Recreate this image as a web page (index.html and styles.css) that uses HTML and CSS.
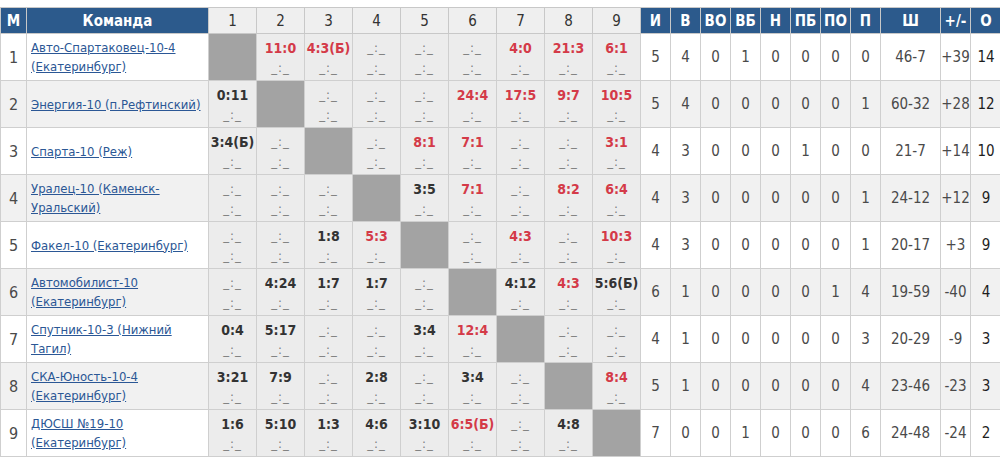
FILE: index.html
```html
<!DOCTYPE html>
<html lang="ru">
<head>
<meta charset="utf-8">
<link rel="stylesheet" href="styles.css">
</head>
<body>
<table class="tbl">
<colgroup>
<col class="c-m"><col class="c-team">
<col class="c-g"><col class="c-g"><col class="c-g"><col class="c-g"><col class="c-g"><col class="c-g"><col class="c-g"><col class="c-g"><col class="c-g">
<col class="c-s"><col class="c-s"><col class="c-s"><col class="c-s"><col class="c-s"><col class="c-s"><col class="c-s"><col class="c-s">
<col class="c-w"><col class="c-s"><col class="c-o">
</colgroup>
<thead>
<tr>
<th class="hb">М</th><th class="hb">Команда</th>
<th class="hg">1</th><th class="hg">2</th><th class="hg">3</th><th class="hg">4</th><th class="hg">5</th><th class="hg">6</th><th class="hg">7</th><th class="hg">8</th><th class="hg">9</th>
<th class="hb">И</th><th class="hb">В</th><th class="hb">ВО</th><th class="hb">ВБ</th><th class="hb">Н</th><th class="hb">ПБ</th><th class="hb">ПО</th><th class="hb">П</th><th class="hb">Ш</th><th class="hb">+/-</th><th class="hb">О</th>
</tr>
</thead>
<tbody>
<tr>
<td class="pos">1</td><td class="team"><a href="#">Авто-Спартаковец-10-4 (Екатеринбург)</a></td>
<td class="x"></td>
<td class="g"><span class="sc w">11:0</span><span class="ph">_:_</span></td>
<td class="g"><span class="sc w">4:3(Б)</span><span class="ph">_:_</span></td>
<td class="g"><span class="ph">_:_</span><span class="ph">_:_</span></td>
<td class="g"><span class="ph">_:_</span><span class="ph">_:_</span></td>
<td class="g"><span class="ph">_:_</span><span class="ph">_:_</span></td>
<td class="g"><span class="sc w">4:0</span><span class="ph">_:_</span></td>
<td class="g"><span class="sc w">21:3</span><span class="ph">_:_</span></td>
<td class="g"><span class="sc w">6:1</span><span class="ph">_:_</span></td>
<td>5</td><td>4</td><td>0</td><td>1</td><td>0</td><td>0</td><td>0</td><td>0</td><td>46-7</td><td>+39</td><td class="pts">14</td>
</tr>
<tr>
<td class="pos">2</td><td class="team"><a href="#">Энергия-10 (п.Рефтинский)</a></td>
<td class="g"><span class="sc">0:11</span><span class="ph">_:_</span></td>
<td class="x"></td>
<td class="g"><span class="ph">_:_</span><span class="ph">_:_</span></td>
<td class="g"><span class="ph">_:_</span><span class="ph">_:_</span></td>
<td class="g"><span class="ph">_:_</span><span class="ph">_:_</span></td>
<td class="g"><span class="sc w">24:4</span><span class="ph">_:_</span></td>
<td class="g"><span class="sc w">17:5</span><span class="ph">_:_</span></td>
<td class="g"><span class="sc w">9:7</span><span class="ph">_:_</span></td>
<td class="g"><span class="sc w">10:5</span><span class="ph">_:_</span></td>
<td>5</td><td>4</td><td>0</td><td>0</td><td>0</td><td>0</td><td>0</td><td>1</td><td>60-32</td><td>+28</td><td class="pts">12</td>
</tr>
<tr>
<td class="pos">3</td><td class="team"><a href="#">Спарта-10 (Реж)</a></td>
<td class="g"><span class="sc">3:4(Б)</span><span class="ph">_:_</span></td>
<td class="g"><span class="ph">_:_</span><span class="ph">_:_</span></td>
<td class="x"></td>
<td class="g"><span class="ph">_:_</span><span class="ph">_:_</span></td>
<td class="g"><span class="sc w">8:1</span><span class="ph">_:_</span></td>
<td class="g"><span class="sc w">7:1</span><span class="ph">_:_</span></td>
<td class="g"><span class="ph">_:_</span><span class="ph">_:_</span></td>
<td class="g"><span class="ph">_:_</span><span class="ph">_:_</span></td>
<td class="g"><span class="sc w">3:1</span><span class="ph">_:_</span></td>
<td>4</td><td>3</td><td>0</td><td>0</td><td>0</td><td>1</td><td>0</td><td>0</td><td>21-7</td><td>+14</td><td class="pts">10</td>
</tr>
<tr>
<td class="pos">4</td><td class="team"><a href="#">Уралец-10 (Каменск-Уральский)</a></td>
<td class="g"><span class="ph">_:_</span><span class="ph">_:_</span></td>
<td class="g"><span class="ph">_:_</span><span class="ph">_:_</span></td>
<td class="g"><span class="ph">_:_</span><span class="ph">_:_</span></td>
<td class="x"></td>
<td class="g"><span class="sc">3:5</span><span class="ph">_:_</span></td>
<td class="g"><span class="sc w">7:1</span><span class="ph">_:_</span></td>
<td class="g"><span class="ph">_:_</span><span class="ph">_:_</span></td>
<td class="g"><span class="sc w">8:2</span><span class="ph">_:_</span></td>
<td class="g"><span class="sc w">6:4</span><span class="ph">_:_</span></td>
<td>4</td><td>3</td><td>0</td><td>0</td><td>0</td><td>0</td><td>0</td><td>1</td><td>24-12</td><td>+12</td><td class="pts">9</td>
</tr>
<tr>
<td class="pos">5</td><td class="team"><a href="#">Факел-10 (Екатеринбург)</a></td>
<td class="g"><span class="ph">_:_</span><span class="ph">_:_</span></td>
<td class="g"><span class="ph">_:_</span><span class="ph">_:_</span></td>
<td class="g"><span class="sc">1:8</span><span class="ph">_:_</span></td>
<td class="g"><span class="sc w">5:3</span><span class="ph">_:_</span></td>
<td class="x"></td>
<td class="g"><span class="ph">_:_</span><span class="ph">_:_</span></td>
<td class="g"><span class="sc w">4:3</span><span class="ph">_:_</span></td>
<td class="g"><span class="ph">_:_</span><span class="ph">_:_</span></td>
<td class="g"><span class="sc w">10:3</span><span class="ph">_:_</span></td>
<td>4</td><td>3</td><td>0</td><td>0</td><td>0</td><td>0</td><td>0</td><td>1</td><td>20-17</td><td>+3</td><td class="pts">9</td>
</tr>
<tr>
<td class="pos">6</td><td class="team"><a href="#">Автомобилист-10 (Екатеринбург)</a></td>
<td class="g"><span class="ph">_:_</span><span class="ph">_:_</span></td>
<td class="g"><span class="sc">4:24</span><span class="ph">_:_</span></td>
<td class="g"><span class="sc">1:7</span><span class="ph">_:_</span></td>
<td class="g"><span class="sc">1:7</span><span class="ph">_:_</span></td>
<td class="g"><span class="ph">_:_</span><span class="ph">_:_</span></td>
<td class="x"></td>
<td class="g"><span class="sc">4:12</span><span class="ph">_:_</span></td>
<td class="g"><span class="sc w">4:3</span><span class="ph">_:_</span></td>
<td class="g"><span class="sc">5:6(Б)</span><span class="ph">_:_</span></td>
<td>6</td><td>1</td><td>0</td><td>0</td><td>0</td><td>0</td><td>1</td><td>4</td><td>19-59</td><td>-40</td><td class="pts">4</td>
</tr>
<tr>
<td class="pos">7</td><td class="team"><a href="#">Спутник-10-3 (Нижний Тагил)</a></td>
<td class="g"><span class="sc">0:4</span><span class="ph">_:_</span></td>
<td class="g"><span class="sc">5:17</span><span class="ph">_:_</span></td>
<td class="g"><span class="ph">_:_</span><span class="ph">_:_</span></td>
<td class="g"><span class="ph">_:_</span><span class="ph">_:_</span></td>
<td class="g"><span class="sc">3:4</span><span class="ph">_:_</span></td>
<td class="g"><span class="sc w">12:4</span><span class="ph">_:_</span></td>
<td class="x"></td>
<td class="g"><span class="ph">_:_</span><span class="ph">_:_</span></td>
<td class="g"><span class="ph">_:_</span><span class="ph">_:_</span></td>
<td>4</td><td>1</td><td>0</td><td>0</td><td>0</td><td>0</td><td>0</td><td>3</td><td>20-29</td><td>-9</td><td class="pts">3</td>
</tr>
<tr>
<td class="pos">8</td><td class="team"><a href="#">СКА-Юность-10-4 (Екатеринбург)</a></td>
<td class="g"><span class="sc">3:21</span><span class="ph">_:_</span></td>
<td class="g"><span class="sc">7:9</span><span class="ph">_:_</span></td>
<td class="g"><span class="ph">_:_</span><span class="ph">_:_</span></td>
<td class="g"><span class="sc">2:8</span><span class="ph">_:_</span></td>
<td class="g"><span class="ph">_:_</span><span class="ph">_:_</span></td>
<td class="g"><span class="sc">3:4</span><span class="ph">_:_</span></td>
<td class="g"><span class="ph">_:_</span><span class="ph">_:_</span></td>
<td class="x"></td>
<td class="g"><span class="sc w">8:4</span><span class="ph">_:_</span></td>
<td>5</td><td>1</td><td>0</td><td>0</td><td>0</td><td>0</td><td>0</td><td>4</td><td>23-46</td><td>-23</td><td class="pts">3</td>
</tr>
<tr>
<td class="pos">9</td><td class="team"><a href="#">ДЮСШ №19-10 (Екатеринбург)</a></td>
<td class="g"><span class="sc">1:6</span><span class="ph">_:_</span></td>
<td class="g"><span class="sc">5:10</span><span class="ph">_:_</span></td>
<td class="g"><span class="sc">1:3</span><span class="ph">_:_</span></td>
<td class="g"><span class="sc">4:6</span><span class="ph">_:_</span></td>
<td class="g"><span class="sc">3:10</span><span class="ph">_:_</span></td>
<td class="g"><span class="sc w">6:5(Б)</span><span class="ph">_:_</span></td>
<td class="g"><span class="ph">_:_</span><span class="ph">_:_</span></td>
<td class="g"><span class="sc">4:8</span><span class="ph">_:_</span></td>
<td class="x"></td>
<td>7</td><td>0</td><td>0</td><td>1</td><td>0</td><td>0</td><td>0</td><td>6</td><td>24-48</td><td>-24</td><td class="pts">2</td>
</tr>
</tbody>
</table>
</body>
</html>
```

FILE: styles.css
```css
html, body {
  margin: 0;
  padding: 0;
  background: #fff;
}
body {
  padding-top: 7px;
  font-family: "DejaVu Sans Condensed", "DejaVu Sans", sans-serif;
  color: #3a3a3a;
}
.tbl {
  border-collapse: collapse;
  table-layout: fixed;
  width: 1001px;
}
.c-m { width: 26px; }
.c-team { width: 182px; }
.c-g { width: 48px; }
.c-s { width: 30px; }
.c-w { width: 60px; }
.c-o { width: 31px; }

.tbl th {
  height: 25px;
  padding: 0;
  border: 1px solid #c8c8c8;
  font-size: 15px;
  text-align: center;
  vertical-align: middle;
}
.hb {
  background: #2c5a8c;
  color: #fff;
  font-weight: bold;
}
.hg {
  background: #efefef;
  color: #333;
  font-weight: normal;
}
.tbl td {
  height: 46px;
  padding: 0;
  border: 1px solid #cfcfcf;
  text-align: center;
  vertical-align: middle;
  font-size: 15px;
  color: #4a4a4a;
}
.tbl tbody tr:nth-child(even) td { background: #f1f1f1; }
.tbl td.pos { font-size: 16px; }
.tbl td.team {
  text-align: left;
  padding: 0 4px;
  font-size: 13px;
  line-height: 19px;
}
.team a {
  color: #2b5795;
  text-decoration: underline;
}
.tbl tbody tr td.g {
  background: #ececec;
  vertical-align: top;
}
.tbl tbody tr td.x { background: #a3a3a3; }
.sc, .ph {
  display: block;
}
.sc {
  margin-top: 4px;
  height: 20px;
  line-height: 20px;
  font-size: 14px;
  font-weight: bold;
  color: #333;
}
.sc.w { color: #d43a48; }
.ph {
  font-size: 13px;
  line-height: 20px;
  height: 20px;
  color: #7c7c7c;
  letter-spacing: 1px;
}
.ph:first-child {
  margin-top: 4px;
}
.tbl td.pts { color: #1e1e1e; }
```
